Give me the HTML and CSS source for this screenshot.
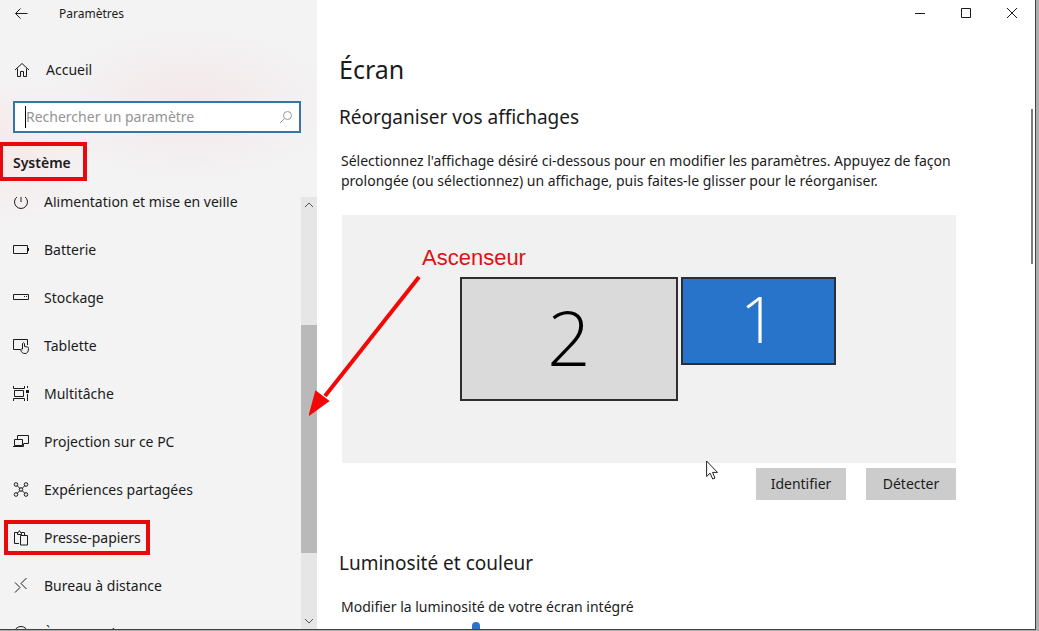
FILE: index.html
```html
<!DOCTYPE html>
<html lang="fr">
<head>
<meta charset="utf-8">
<meta name="viewport" content="width=device-width, initial-scale=1">
<title>Paramètres</title>
<link rel="stylesheet" href="styles.css">
</head>
<body>
<div class="desktop">
<div class="window">
  <aside class="sidebar">
    <header class="app-bar">
      <button class="back" type="button" aria-label="Retour"><svg class="icon" width="16" height="16" viewBox="0 0 16 16"><path d="M13.500 7.500H1.500M6.500 2.500l-5 5 5 5"/></svg></button>
      <span class="app-title">Paramètres</span>
    </header>
    <a class="nav-link home" href="#"><svg class="icon" width="16" height="16" viewBox="0 0 16 16"><path d="M1 8L8 1.500 15 8M3.500 6.500V14.500H6.500V9.500H9.500V14.500H12.500V6.500"/></svg><span>Accueil</span></a>
    <label class="search">
      <input class="search-input" type="text" placeholder="Rechercher un paramètre" aria-label="Rechercher un paramètre">
      <svg class="icon search-icon" width="14" height="14" viewBox="0 0 14 14"><circle cx="8.500" cy="5.500" r="4"/><path d="M5.500 8.500L1 13"/></svg>
    </label>
    <h2 class="category"><span class="category-name">Système</span></h2>
    <div class="nav-area">
      <nav class="nav-view">
        <ul class="nav-list">
          <li><a class="nav-link" href="#"><svg class="icon" width="16" height="16" viewBox="0 0 16 16"><path d="M8 1v7M4.500 2.500a6.500 6.500 0 1 0 7 0"/></svg><span>Alimentation et mise en veille</span></a></li>
          <li><a class="nav-link" href="#"><svg class="icon" width="16" height="16" viewBox="0 0 16 16"><path d="M.5 3.500H14.500V11.500H.5zM15.500 6v3"/></svg><span>Batterie</span></a></li>
          <li><a class="nav-link" href="#"><svg class="icon" width="16" height="16" viewBox="0 0 16 16"><path d="M.5 4.500H15.500V9.500H.5zM11 6.500h1M13 6.500h1"/></svg><span>Stockage</span></a></li>
          <li><a class="nav-link" href="#"><svg class="icon" width="16" height="16" viewBox="0 0 16 16"><path d="M7 11.500H.5V1.500H14.500V7M9.500 11V5.500q1-1.500 2 0V8.500l3 .5q1 0 1 1.500c0 3-1 5-3.500 5s-3.500-1-4.500-4q1-1 2 .5"/></svg><span>Tablette</span></a></li>
          <li><a class="nav-link" href="#"><svg class="icon" width="16" height="16" viewBox="0 0 16 16"><path d="M.5 0v2.500h11V0M1.500 4.500h9v6h-9zM.5 15v-2.500h11V15M14.500 0v2M14.500 8v7"/><path class="fill" d="M13 4h3v3h-3z"/></svg><span>Multitâche</span></a></li>
          <li><a class="nav-link" href="#"><svg class="icon" width="16" height="16" viewBox="0 0 16 16"><path d="M4.500 5V1.500H15.500V9.500H11M1.500 5.500h8v6h-8zM0 12.500h10.500v-3"/></svg><span>Projection sur ce PC</span></a></li>
          <li><a class="nav-link" href="#"><svg class="icon" width="16" height="16" viewBox="0 0 16 16"><circle cx="3" cy="2.500" r="1.800"/><circle cx="13" cy="2.500" r="1.800"/><circle cx="3" cy="12.500" r="1.800"/><circle cx="13" cy="12.500" r="1.800"/><circle cx="8" cy="7.500" r="1.800"/><path d="M4 3.500l3 3M12 3.500l-3 3M4 11.500l3-3M12 11.500l-3-3"/></svg><span>Expériences partagées</span></a></li>
          <li><a class="nav-link" href="#"><svg class="icon" width="16" height="16" viewBox="0 0 16 16"><path d="M6 13.500H1.500V2.500H4.500M8.500 2.500h3V5.500M4.500 4.500V2.500H5.500Q6.500-1 7.500 2.500H8.500V4.500zM7.500 5.500H14.500V15H7.500z"/></svg><span>Presse-papiers</span></a></li>
          <li><a class="nav-link" href="#"><svg class="icon" width="16" height="16" viewBox="0 0 16 16"><path d="M2 4.500l5 5-5 5M13.500 0L8 5.500l5.500 5.500"/></svg><span>Bureau à distance</span></a></li>
          <li><a class="nav-link" href="#"><svg class="icon" width="16" height="16" viewBox="0 0 16 16"><circle cx="8" cy="7.500" r="7"/><path d="M8 7v5M8 4v1"/></svg><span>À propos de</span></a></li>
        </ul>
        <div class="mark mark-clipboard"></div>
      </nav>
      <div class="scrollbar" aria-hidden="true">
        <svg class="icon arrow" width="16" height="16" viewBox="0 0 16 16"><path d="M4 10l4-4 4 4"/></svg>
        <div class="track"><div class="thumb"></div></div>
        <svg class="icon arrow" width="16" height="16" viewBox="0 0 16 16"><path d="M4 6l4 4 4-4"/></svg>
      </div>
    </div>
  </aside>
  <main class="main">
    <div class="controls">
      <button type="button" aria-label="Réduire"><svg class="icon" width="12" height="12" viewBox="0 0 12 12"><path d="M1 6.500h10"/></svg></button>
      <button type="button" aria-label="Agrandir"><svg class="icon" width="12" height="12" viewBox="0 0 12 12"><path d="M1.500 1.500h9v9h-9z"/></svg></button>
      <button type="button" aria-label="Fermer"><svg class="icon" width="12" height="12" viewBox="0 0 12 12"><path d="M1 1l10 10M11 1L1 11"/></svg></button>
    </div>
    <div class="page">
      <h1 class="page-title">Écran</h1>
      <section class="arrange">
        <h2 class="section-title">Réorganiser vos affichages</h2>
        <p class="text">Sélectionnez l'affichage désiré ci-dessous pour en modifier les paramètres. Appuyez de façon prolongée (ou sélectionnez) un affichage, puis faites-le glisser pour le réorganiser.</p>
        <div class="displays">
          <button class="display display-two" type="button">2</button>
          <button class="display display-one" type="button">1</button>
        </div>
        <div class="actions">
          <button class="action" type="button">Identifier</button>
          <button class="action" type="button">Détecter</button>
        </div>
      </section>
      <section class="brightness">
        <h2 class="section-title">Luminosité et couleur</h2>
        <label class="text" for="level">Modifier la luminosité de votre écran intégré</label>
        <input class="slider" id="level" type="range" min="0" max="100" value="50">
      </section>
    </div>
    <div class="page-thumb"></div>
  </main>
</div>
<div class="mark mark-category"></div>
<svg class="arrow-note" width="112" height="142" viewBox="0 0 112 142"><path class="shaft" d="M110 2L16 121"/><path class="head" d="M1 139L7 117L19 126Z"/></svg>
<span class="note">Ascenseur</span>
<svg class="cursor" width="13" height="20" viewBox="0 0 13 20"><path d="M.6 1v15.500l3.500-3.300 2.600 5.800 2.300-1-2.500-5.600h5z"/></svg>
</div>
</body>
</html>
```
FILE: styles.css
```css
* { box-sizing: border-box; }
body { margin: 0; font: 14px/20px "Noto Sans", "Open Sans", sans-serif; color: #1b1b1b; }
h1, h2, p, ul { margin: 0; padding: 0; font-weight: 400; }
button { border: 0; padding: 0; background: none; font: inherit; color: inherit; }

.desktop { position: relative; height: 100vh; padding: 0 3px 1px 0; background: #b0aeac; overflow: hidden; }
.window { display: flex; height: 100%; background: #fff; border: solid #414045; border-width: 0 1px 1px 0; overflow: hidden; }
.icon { flex: none; fill: none; stroke: #1b1b1b; stroke-width: 1; }
.icon .fill { fill: #1b1b1b; stroke: none; }

.sidebar {
  flex: none; display: flex; flex-direction: column; width: 317px;
  background:
    radial-gradient(ellipse 150px 80px at 190px 105px, #f4e8e9, transparent),
    radial-gradient(ellipse 110px 80px at 0 150px, #f7e9e9, transparent),
    #f3f3f4;
}
.app-bar { display: flex; align-items: center; gap: 29px; height: 28px; padding-left: 14px; font-size: 12px; }
.back { display: flex; }
.nav-link { display: flex; align-items: center; gap: 15px; height: 48px; padding-left: 13px; color: inherit; text-decoration: none; white-space: nowrap; }
.home { gap: 16px; margin-top: 18px; padding-left: 14px; }
.search { display: flex; align-items: center; height: 32px; margin: 7px 16px 0 13px; padding: 0 6px 0 10px; background: #fff; border: 2px solid #3477a5; }
.search-input { flex: 1; min-width: 0; height: 22px; padding: 0 0 2px; border: 0; border-left: 1px solid #000; outline: 0; background: none; font: inherit; }
.search-input::placeholder { color: #949494; opacity: 1; }
.search-icon { stroke: #999; }
.category { height: 64px; padding: 20px 13px; font-size: 14px; line-height: 20px; font-weight: 600; }
.nav-area { flex: 1; min-height: 0; display: flex; }
.nav-view { position: relative; flex: 1; overflow: hidden; }
.nav-list { list-style: none; margin-top: -19px; }
.scrollbar { flex: none; display: flex; flex-direction: column; width: 16px; background: #e6e6e6; }
.arrow { stroke: #555; }
.track { flex: 1; display: flex; flex-direction: column; }
.thumb { height: 57%; margin-top: 112px; background: #b9b9b9; }

.main { position: relative; flex: 1; min-width: 0; }
.controls { display: flex; justify-content: flex-end; }
.controls button { display: flex; align-items: center; justify-content: center; width: 46px; height: 26px; }
.page { max-width: 639px; padding: 23px 0 0 22px; }
.page-title { font-size: 25px; line-height: 40px; }
.section-title { font-size: 19px; line-height: 26px; }
.arrange .section-title { margin-top: 15px; }
.text { display: block; margin: 21px 0 0 2px; }
.displays { display: flex; align-items: flex-start; gap: 3px; height: 248px; margin: 24px 0 5px 3px; padding: 62px 0 0 118px; background: #f1f1f1; }
.display { padding-bottom: 4px; border: 2px solid #2e2e2e; font-family: "Open Sans", sans-serif; font-weight: 300; }
.display-two { width: 218px; height: 124px; background: #dadada; color: #000; font-size: 76px; }
.display-one { width: 155px; height: 88px; background: #2874cb; color: #fff; font-size: 64px; }
.actions { display: flex; justify-content: flex-end; gap: 20px; }
.action { width: 90px; height: 32px; background: #ccc; }
.brightness { margin-top: 50px; }
.slider { display: block; appearance: none; width: 274px; height: 24px; margin: 5px 0 0; background: none; }
.slider::-webkit-slider-thumb { appearance: none; width: 8px; height: 24px; border-radius: 4px; background: #2874cb; }
.page-thumb { position: absolute; top: 109px; right: 2px; width: 2px; height: 155px; background: #7c7c80; }

.mark { position: absolute; border: 4px solid #e80a0a; }
.mark-category { left: -1px; top: 142px; width: 88px; height: 39px; }
.mark-clipboard { left: 4px; top: 323px; width: 146px; height: 35px; }
.arrow-note { position: absolute; left: 309px; top: 275px; }
.shaft { stroke: #f30808; stroke-width: 4; }
.head { fill: #f30808; stroke: #f30808; stroke-width: 2; }
.note { position: absolute; left: 422px; top: 246px; font: 22px/24px "Liberation Sans", Arial, sans-serif; color: #e01010; }
.cursor { position: absolute; left: 706px; top: 460px; fill: #fff; stroke: #222; }
```
